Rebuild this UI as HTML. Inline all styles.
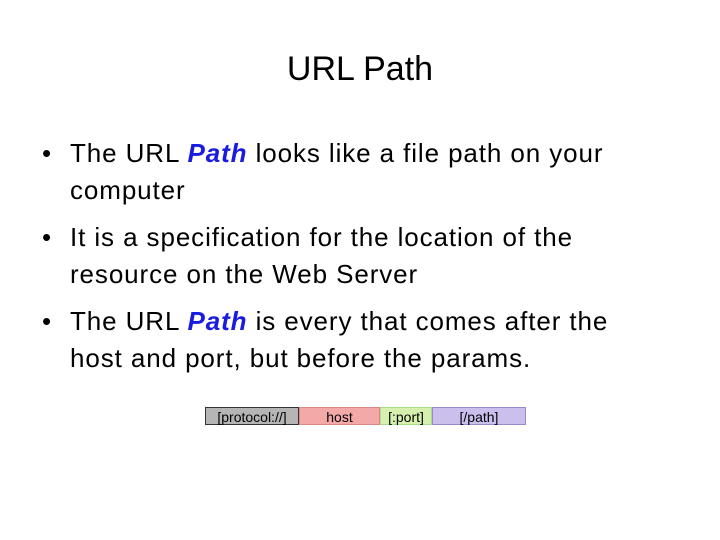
<!DOCTYPE html><html><head><style>
body{margin:0;width:720px;height:540px;background:#fff;font-family:"Liberation Sans",sans-serif;color:#000;position:relative;overflow:hidden}
h1{position:absolute;top:50px;left:0;width:720px;text-align:center;font-weight:normal;font-size:34px;margin:0}
.b{position:absolute;left:70px;font-size:26px;line-height:37px;width:660px;white-space:nowrap;letter-spacing:0.9px}
.b:before{content:"•";position:absolute;left:-28px}
em{color:#1a1ae0;font-weight:bold}
.bx{position:absolute;top:407px;height:18px;font-size:14px;text-align:center;line-height:18px;box-sizing:border-box}
</style></head><body>
<h1>URL Path</h1>
<div class="b" style="top:135px">The URL <em>Path</em> looks like a file path on your<br>computer</div>
<div class="b" style="top:219px">It is a specification for the location of the<br>resource on the Web Server</div>
<div class="b" style="top:303px">The URL <em>Path</em> is every that comes after the<br>host and port, but before the params.</div>
<div class="bx" style="left:205px;width:94px;background:#b5b5b5;border:1px solid #333">[protocol://]</div>
<div class="bx" style="left:299px;width:81px;background:#f4a9a9;border:1px solid #d88">host</div>
<div class="bx" style="left:380px;width:52px;background:#d6f0b0;border:1px solid #ad8">[:port]</div>
<div class="bx" style="left:432px;width:94px;background:#cbbfee;border:1px solid #98c">[/path]</div>
</body></html>
